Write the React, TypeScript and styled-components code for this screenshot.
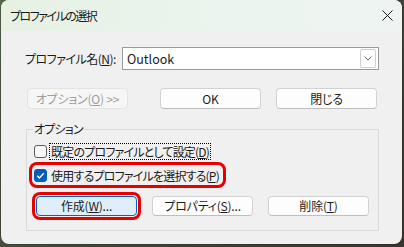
import React from "react";
import styled, { createGlobalStyle, css } from "styled-components";

const GlobalStyle = createGlobalStyle`
  html, body {
    margin: 0;
    padding: 0;
    width: 404px;
    height: 247px;
    overflow: hidden;
    background: linear-gradient(135deg, #56664a 0%, #3f4736 50%, #3a3430 100%);
  }
  body {
    font-family: "Noto Sans CJK JP", "Noto Sans", sans-serif;
    font-size: 12px;
    font-feature-settings: "palt";
    letter-spacing: -0.8px;
    color: #1b1b1b;
  }
  * { box-sizing: border-box; }
`;

const Window = styled.div`
  margin: 0 0 0 1px;
  width: 401px;
  height: 244px;
  border-radius: 8px;
  background: #f0f0f0;
  overflow: hidden;
  display: flex;
  flex-direction: column;
  box-shadow: 0 0 0 1px rgba(0, 0, 0, 0.12);
`;

const TitleBar = styled.div`
  height: 31px;
  flex: none;
  display: flex;
  align-items: center;
  justify-content: space-between;
  padding: 0 9px 0 9px;
  background: linear-gradient(90deg, #e6f1e4 0%, #ecf4ef 60%, #eef4f3 100%);
`;

const Title = styled.span`
  font-size: 12px;
  line-height: 16px;
  letter-spacing: -1.5px;
  color: #1a1a1a;
`;

const Body = styled.div`
  padding: 16px 0 0 24px;
  display: flex;
  flex-direction: column;
`;

const ProfileRow = styled.div`
  display: flex;
  align-items: center;
  height: 23px;
`;

const FieldLabel = styled.label`
  width: 97px;
  line-height: 16px;
  letter-spacing: -0.5px;
`;

const Combo = styled.div`
  width: 257px;
  height: 23px;
  background: #fff;
  border: 1px solid #9a9a9a;
  display: flex;
  align-items: center;
  padding: 0 2px 0 4px;
  font-size: 12.5px;
  letter-spacing: 0;
`;

const DropBtn = styled.div`
  margin-left: auto;
  width: 16px;
  height: 19px;
  border: 1px solid #cfcfcf;
  border-radius: 2px;
  background: #fff;
  display: flex;
  align-items: center;
  justify-content: center;
`;

const ButtonRow = styled.div<{ $pad: number; $gap: number }>`
  display: flex;
  padding-left: ${(p) => p.$pad}px;
  gap: ${(p) => p.$gap}px;
`;

const TopRow = styled(ButtonRow)`
  margin-top: 18px;
`;

const Button = styled.div<{ $h?: number; $disabled?: boolean; $focus?: boolean; $after?: number }>`
  width: 101px;
  height: ${(p) => p.$h ?? 20}px;
  display: flex;
  align-items: center;
  justify-content: center;
  border-radius: 4px;
  border: 1px solid #d1d1d1;
  border-bottom-color: #bdbdbd;
  background: #fdfdfd;
  line-height: 16px;
  letter-spacing: -0.2px;
  white-space: pre;
  margin-right: ${(p) => p.$after ?? 0}px;
  ${(p) =>
    p.$disabled &&
    css`
      color: #9d9d9d;
      background: #f6f6f6;
      border-color: #e3e3e3;
    `}
  ${(p) =>
    p.$focus &&
    css`
      background: #e0eef9;
      border-color: #0067c0;
      box-shadow: 0 0 0 1px #f0f0f0, 0 0 0 4px #e80000;
    `}
`;

const Group = styled.fieldset`
  margin: 12px 0 0 1px;
  padding: 0;
  width: 353px;
  border: 1px solid #dadada;
  min-inline-size: 0;
`;

const Legend = styled.legend`
  margin-left: 6px;
  padding: 0 1px;
  line-height: 16px;
  font-size: 12px;
`;

const GroupContent = styled.div`
  padding: 6px 0 14px 5px;
  display: flex;
  flex-direction: column;
  align-items: flex-start;
`;

const CheckRow = styled.div<{ $ring?: boolean; $h: number; $top: number }>`
  display: flex;
  align-items: center;
  gap: 3px;
  height: ${(p) => p.$h}px;
  margin-top: ${(p) => p.$top}px;
  padding: 0 3px 0 2px;
  border-radius: 5px;
  ${(p) =>
    p.$ring &&
    css`
      box-shadow: 0 0 0 3px #e80000;
    `}
`;

const Box = styled.span<{ $checked?: boolean }>`
  width: 13px;
  height: 13px;
  border-radius: 3px;
  flex: none;
  display: flex;
  align-items: center;
  justify-content: center;
  border: 1px solid ${(p) => (p.$checked ? "#005fb8" : "#5c5c5c")};
  background: ${(p) => (p.$checked ? "#005fb8" : "#f7f7f7")};
`;

const CheckText = styled.span<{ $focus?: boolean }>`
  line-height: 15px;
  padding: 0 1px;
  outline: ${(p) => (p.$focus ? "1px dotted #000" : "none")};
`;

const BottomRow = styled(ButtonRow)`
  margin-top: 11px;
`;

const CloseIcon = () => (
  <svg width="11" height="11" viewBox="0 0 11 11">
    <path d="M0.5 0.5 L10.5 10.5 M10.5 0.5 L0.5 10.5" stroke="#1a1a1a" strokeWidth="1" />
  </svg>
);

const Chevron = () => (
  <svg width="8" height="5" viewBox="0 0 8 5">
    <path d="M0.5 0.5 L4 4 L7.5 0.5" stroke="#606060" strokeWidth="1" fill="none" />
  </svg>
);

const Check = () => (
  <svg width="11" height="11" viewBox="0 0 11 11">
    <path d="M2.2 5.8 L4.4 8 L8.8 3.2" stroke="#fff" strokeWidth="1.3" fill="none" />
  </svg>
);

export default function App() {
  return (
    <>
      <GlobalStyle />
      <Window>
        <TitleBar>
          <Title>プロファイルの選択</Title>
          <CloseIcon />
        </TitleBar>
        <Body>
          <ProfileRow>
            <FieldLabel>
              プロファイル名(<u>N</u>):
            </FieldLabel>
            <Combo>
              Outlook
              <DropBtn>
                <Chevron />
              </DropBtn>
            </Combo>
          </ProfileRow>
          <TopRow $pad={2} $gap={0}>
            <Button $h={21} $disabled $after={32}>
              オプション(<u>O</u>) {">>"}
            </Button>
            <Button $h={21} $after={15}>OK</Button>
            <Button $h={21}>閉じる</Button>
          </TopRow>
          <Group>
            <Legend>オプション</Legend>
            <GroupContent>
              <CheckRow $h={17} $top={0}>
                <Box />
                <CheckText $focus>
                  既定のプロファイルとして設定(<u>D</u>)
                </CheckText>
              </CheckRow>
              <CheckRow $h={20} $top={5} $ring>
                <Box $checked>
                  <Check />
                </Box>
                <CheckText>
                  使用するプロファイルを選択する(<u>P</u>)
                </CheckText>
              </CheckRow>
              <BottomRow $pad={4} $gap={15}>
                <Button $focus>
                  作成(<u>W</u>)...
                </Button>
                <Button>
                  プロパティ(<u>S</u>)...
                </Button>
                <Button>
                  削除(<u>T</u>)
                </Button>
              </BottomRow>
            </GroupContent>
          </Group>
        </Body>
      </Window>
    </>
  );
}
